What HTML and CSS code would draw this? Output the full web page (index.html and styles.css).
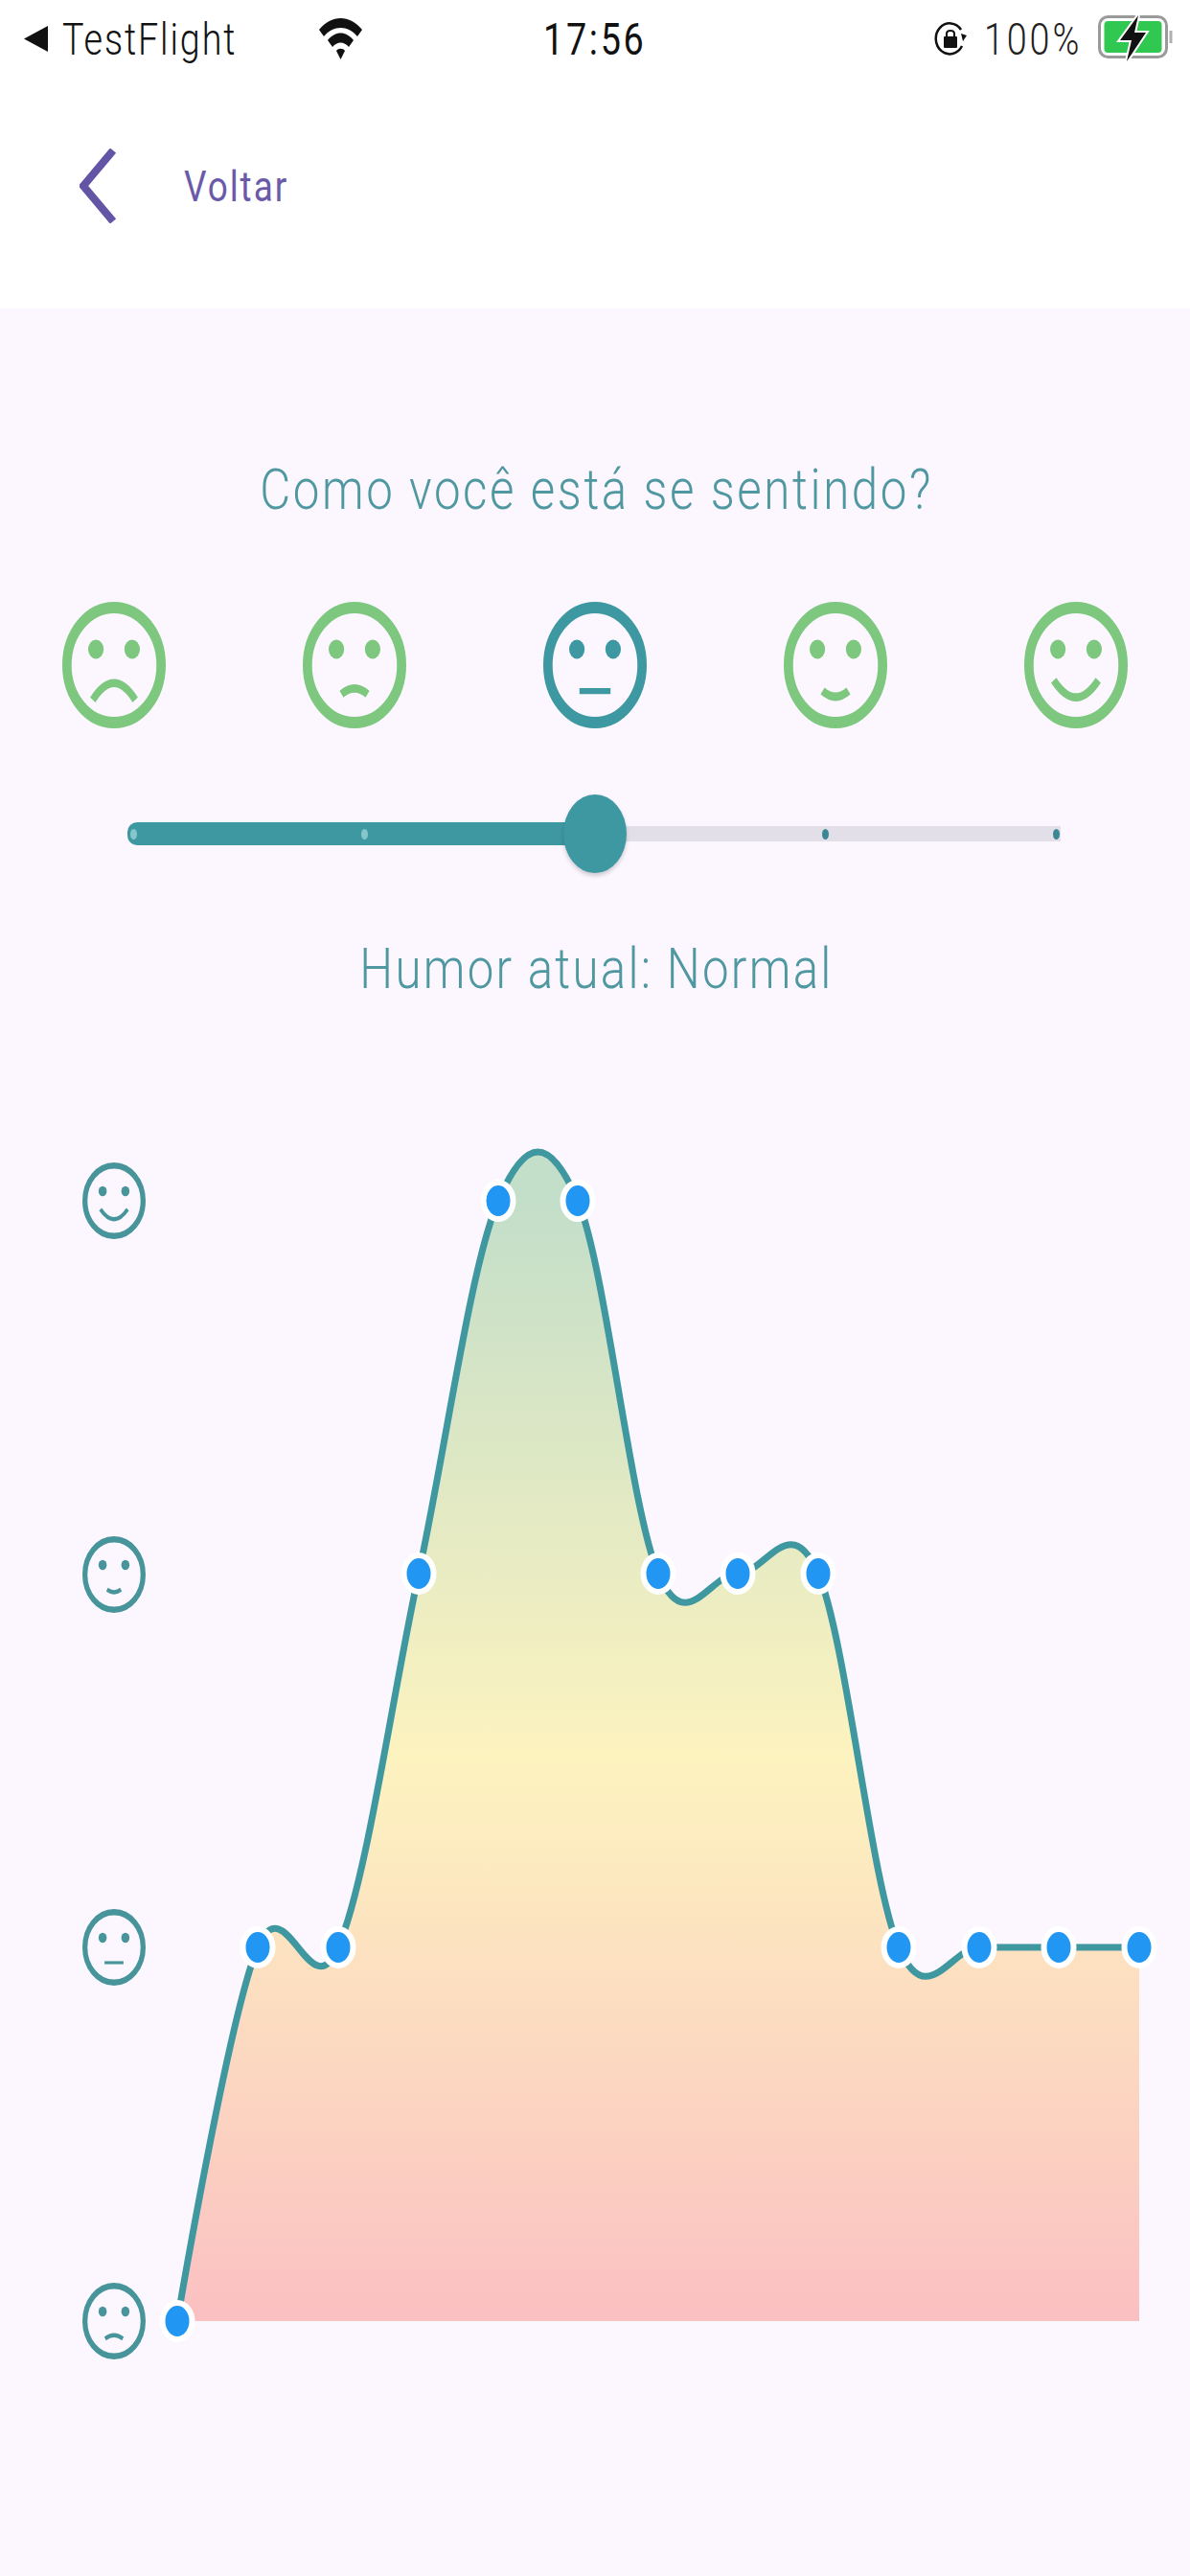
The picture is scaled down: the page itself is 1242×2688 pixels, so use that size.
FILE: index.html
```html
<!DOCTYPE html>
<html>
  <head>
    <title>Humor</title>
    <link rel="stylesheet" href="styles.css">
  </head>
  <body>
    <div class="status-bar">
      <div class="status-left">
        <svg class="back-arrow" viewBox="0 0 25 27"><path d="M25 0V27L0 13.5Z"/></svg>
        <span class="status-text carrier">TestFlight</span>
        <svg class="wifi" viewBox="0 0 47 44">
          <path d="M1 13C14 -3 33 -3 46 13L41 20C31 8 16 8 6 20Z"/>
          <path d="M10 24C18 14 29 14 37 24L32 31C27 25 20 25 15 31Z"/>
          <path d="M19 35C21 32 26 32 28 35L23.5 44Z"/>
        </svg>
      </div>
      <span class="status-text clock">17:56</span>
      <div class="status-right">
        <svg class="rotation-lock" viewBox="0 0 34 36">
          <path class="lock-ring" d="M29 25A14.5 16 0 1 1 28 8"/>
          <path d="M28 12L34 14L30 20Z"/>
          <rect x="10" y="15" width="14" height="12" rx="1"/>
          <path class="lock-ring thin" d="M13 15V12C13 8 21 8 21 12V15"/>
        </svg>
        <span class="status-text level">100%</span>
        <svg class="battery" viewBox="0 0 78 50">
          <rect class="battery-shell" x="1.5" y="2.5" width="70" height="42" rx="9"/>
          <rect class="battery-fill" x="6.5" y="7" width="60" height="33" rx="4"/>
          <path class="battery-nub" d="M76 17V30"/>
          <path class="battery-bolt" d="M42 1L23 27H35L30 49L50 19H38Z"/>
        </svg>
      </div>
    </div>

    <div class="top-nav">
      <svg class="chevron" viewBox="0 0 38 78"><path d="M35 2L4 39L35 76"/></svg>
      <span class="nav-label">Voltar</span>
    </div>

    <div class="content">
      <h2 class="title"><span>Como você está se sentindo?</span></h2>

      <div class="mood-row">
        <svg class="face" viewBox="2 2 20 20" preserveAspectRatio="none">
          <circle class="ring" cx="12" cy="12" r="9.1"/>
          <circle cx="8.5" cy="9.5" r="1.5"/><circle cx="15.5" cy="9.5" r="1.5"/>
          <path class="mouth" d="M7.9 17.5Q12 12.2 16.1 17.5"/>
        </svg>
        <svg class="face" viewBox="2 2 20 20" preserveAspectRatio="none">
          <circle class="ring" cx="12" cy="12" r="9.1"/>
          <circle cx="8.5" cy="9.5" r="1.5"/><circle cx="15.5" cy="9.5" r="1.5"/>
          <path class="mouth" d="M9.5 16.6Q12 14.8 14.5 16.6"/>
        </svg>
        <svg class="face active" viewBox="2 2 20 20" preserveAspectRatio="none">
          <circle class="ring" cx="12" cy="12" r="9.1"/>
          <circle cx="8.5" cy="9.5" r="1.5"/><circle cx="15.5" cy="9.5" r="1.5"/>
          <path class="mouth flat" d="M9 16.1H15"/>
        </svg>
        <svg class="face" viewBox="2 2 20 20" preserveAspectRatio="none">
          <circle class="ring" cx="12" cy="12" r="9.1"/>
          <circle cx="8.5" cy="9.5" r="1.5"/><circle cx="15.5" cy="9.5" r="1.5"/>
          <path class="mouth" d="M9.5 16.1Q12 17.9 14.5 16.1"/>
        </svg>
        <svg class="face" viewBox="2 2 20 20" preserveAspectRatio="none">
          <circle class="ring" cx="12" cy="12" r="9.1"/>
          <circle cx="8.5" cy="9.5" r="1.5"/><circle cx="15.5" cy="9.5" r="1.5"/>
          <path class="mouth" d="M7.7 14.4Q12 19.8 16.3 14.4"/>
        </svg>
      </div>

      <div class="slider">
        <div class="track-on"></div>
        <div class="track-off"></div>
        <div class="ticks">
          <i class="tick light"></i><i class="tick light"></i><i class="tick light"></i><i class="tick"></i><i class="tick"></i>
        </div>
        <div class="thumb"></div>
      </div>

      <p class="current"><span>Humor atual: Normal</span></p>

      <div class="chart">
        <div class="axis">
          <svg class="axis-face" viewBox="2 2 20 20" preserveAspectRatio="none">
            <circle class="ring" cx="12" cy="12" r="9.2"/>
            <circle cx="8.4" cy="9.5" r="1.3"/><circle cx="15.6" cy="9.5" r="1.3"/>
            <path class="mouth" d="M7.7 14.2Q12 19.4 16.3 14.2"/>
          </svg>
          <svg class="axis-face" viewBox="2 2 20 20" preserveAspectRatio="none">
            <circle class="ring" cx="12" cy="12" r="9.2"/>
            <circle cx="8.4" cy="9.5" r="1.3"/><circle cx="15.6" cy="9.5" r="1.3"/>
            <path class="mouth" d="M9.8 15.9Q12 17.3 14.2 15.9"/>
          </svg>
          <svg class="axis-face" viewBox="2 2 20 20" preserveAspectRatio="none">
            <circle class="ring" cx="12" cy="12" r="9.2"/>
            <circle cx="8.4" cy="9.5" r="1.3"/><circle cx="15.6" cy="9.5" r="1.3"/>
            <path class="mouth flat" d="M9 16H15"/>
          </svg>
          <svg class="axis-face" viewBox="2 2 20 20" preserveAspectRatio="none">
            <circle class="ring" cx="12" cy="12" r="9.2"/>
            <circle cx="8.4" cy="9.5" r="1.3"/><circle cx="15.6" cy="9.5" r="1.3"/>
            <path class="mouth" d="M9.2 16.6Q12 14.8 14.8 16.6"/>
          </svg>
        </div>
        <svg class="plot" viewBox="152 1180 1090 1290">
          <defs>
            <linearGradient id="moodFill" gradientUnits="userSpaceOnUse" x1="0" y1="1253" x2="0" y2="2422">
              <stop offset="0" stop-color="#c3dec9"/>
              <stop offset="0.5" stop-color="#fdf3bf"/>
              <stop offset="1" stop-color="#fbc0c2"/>
            </linearGradient>
          </defs>
          <path fill="url(#moodFill)" d="M185 2422C185 2422 239.6 2100.25 269 2032C298.4 1963.75 323.6 2100.25 353 2032C382.4 1963.75 407.8 1778.3 437 1642C466.2 1505.7 491 1321.1 520 1253C549 1184.9 573.8 1184.9 603 1253C632.2 1321.1 657.8 1573.9 687 1642C716.2 1710.1 740.8 1642 770 1642C799.2 1642 824.6 1573.75 854 1642C883.4 1710.25 908.6 1963.75 938 2032C967.4 2100.25 992.8 2032 1022 2032C1051.2 2032 1075.8 2032 1105 2032C1134.2 2032 1189 2032 1189 2032V2422Z"/>
          <path class="line" d="M185 2422C185 2422 239.6 2100.25 269 2032C298.4 1963.75 323.6 2100.25 353 2032C382.4 1963.75 407.8 1778.3 437 1642C466.2 1505.7 491 1321.1 520 1253C549 1184.9 573.8 1184.9 603 1253C632.2 1321.1 657.8 1573.9 687 1642C716.2 1710.1 740.8 1642 770 1642C799.2 1642 824.6 1573.75 854 1642C883.4 1710.25 908.6 1963.75 938 2032C967.4 2100.25 992.8 2032 1022 2032C1051.2 2032 1075.8 2032 1105 2032C1134.2 2032 1189 2032 1189 2032"/>
          <g class="dots">
            <ellipse cx="185" cy="2422"/><ellipse cx="269" cy="2032"/><ellipse cx="353" cy="2032"/>
            <ellipse cx="437" cy="1642"/><ellipse cx="520" cy="1253"/><ellipse cx="603" cy="1253"/>
            <ellipse cx="687" cy="1642"/><ellipse cx="770" cy="1642"/><ellipse cx="854" cy="1642"/>
            <ellipse cx="938" cy="2032"/><ellipse cx="1022" cy="2032"/><ellipse cx="1105" cy="2032"/>
            <ellipse cx="1189" cy="2032"/>
          </g>
        </svg>
      </div>
    </div>
  </body>
</html>
```

FILE: styles.css
```css
html, body {
  margin: 0;
  padding: 0;
}

body {
  width: 1242px;
  height: 2688px;
  overflow: hidden;
  background-color: #ffffff;
  font-family: Roboto, "Liberation Sans", sans-serif;
}

/* the whole screenshot is squeezed sideways, so text gets a scaleX */
.status-text,
.nav-label,
.title span,
.current span {
  display: inline-block;
  white-space: nowrap;
  transform: scaleX(0.82);
}

.status-bar {
  height: 80px;
  box-sizing: border-box;
  display: flex;
  align-items: center;
  justify-content: space-between;
  padding: 2px 18px 0 25px;
  position: relative;
  color: #111111;
}

.status-left,
.status-right {
  display: flex;
  align-items: center;
}

.status-text {
  font-size: 46px;
  line-height: 78px;
}

.back-arrow {
  width: 25px;
  height: 27px;
  fill: #111111;
  margin-top: -2px;
}

.carrier {
  margin-left: 15px;
  transform-origin: left center;
  width: 181px;
  letter-spacing: 2.3px;
  font-weight: 300;
}

.wifi {
  width: 47px;
  height: 44px;
  margin-left: 86px;
  margin-top: -3px;
  fill: #111111;
}

.clock {
  position: absolute;
  left: 567px;
  top: 2px;
  transform-origin: left center;
  letter-spacing: 3.3px;
}

.rotation-lock {
  width: 34px;
  height: 36px;
  fill: #111111;
}

.lock-ring {
  fill: none;
  stroke: #111111;
  stroke-width: 2.5;
}

.lock-ring.thin {
  stroke-width: 2;
}

.level {
  margin-left: 18px;
  width: 101px;
  transform-origin: left center;
  color: #222222;
  letter-spacing: 3.5px;
  font-weight: 300;
}

.battery {
  width: 78px;
  height: 50px;
  margin-left: 18px;
  margin-top: -3px;
}

.battery-shell {
  fill: none;
  stroke: #9a9a9a;
  stroke-width: 3;
}

.battery-fill {
  fill: #30c850;
}

.battery-nub {
  fill: none;
  stroke: #b0b0b0;
  stroke-width: 3;
}

.battery-bolt {
  fill: #111111;
  stroke: #ffffff;
  stroke-width: 4;
  paint-order: stroke;
}

.top-nav {
  height: 242px;
  display: flex;
  align-items: flex-start;
  padding: 75px 0 0 83px;
  box-sizing: border-box;
}

.chevron {
  width: 38px;
  height: 78px;
  fill: none;
  stroke: #6454a6;
  stroke-width: 8;
}

.nav-label {
  margin: 14px 0 0 71px;
  font-size: 45px;
  line-height: 52px;
  color: #6a5ba9;
  transform-origin: left center;
  letter-spacing: 2.4px;
}

.content {
  height: 2366px;
  background-color: #fcf7ff;
  overflow: hidden;
}

.title {
  margin: 154px 0 0;
  padding-left: 4px;
  font-size: 60px;
  font-weight: 300;
  line-height: 70px;
  letter-spacing: 3.2px;
  text-align: center;
  color: #4f97a1;
}

.mood-row {
  display: flex;
  justify-content: space-between;
  margin: 82px 65px 0 65px;
}

.face {
  width: 108px;
  height: 132px;
  fill: #7dc77f;
}

.face.active {
  fill: #3d98a1;
}

.face .ring {
  stroke: #7dc77f;
  fill: none;
  stroke-width: 1.8;
}

.face.active .ring {
  stroke: #3d98a1;
}

.mouth {
  fill: none;
  stroke-width: 1.3;
}

.face .mouth {
  stroke: #7dc77f;
}

.face.active .mouth {
  stroke: #3d98a1;
}

.mouth.flat {
  stroke-width: 0.95;
}

.slider {
  position: relative;
  display: flex;
  align-items: center;
  height: 24px;
  margin: 98px 135px 0 133px;
}

.track-on {
  width: 488px;
  height: 24px;
  background-color: #3d98a1;
  border-radius: 10px 0 0 10px;
}

.track-off {
  flex: 1;
  height: 16px;
  background-color: #e3dfe8;
}

.ticks {
  position: absolute;
  inset: 0;
  display: flex;
  align-items: center;
  justify-content: space-between;
  padding: 0 1px 0 3px;
}

.tick {
  width: 7px;
  height: 11px;
  border-radius: 50%;
  background-color: #3b8794;
}

.tick.light {
  background-color: #86c6ca;
}

.thumb {
  position: absolute;
  left: 455px;
  top: -29px;
  width: 66px;
  height: 82px;
  border-radius: 50%;
  background-color: #3d98a1;
  box-shadow: 0 3px 4px rgba(0, 0, 0, 0.18);
}

.current {
  margin: 94px 0 0;
  padding-left: 2px;
  font-size: 60px;
  font-weight: 300;
  line-height: 70px;
  letter-spacing: 2.8px;
  text-align: center;
  color: #4f97a1;
}

.chart {
  display: flex;
  height: 1290px;
  margin-top: 134px;
}

.axis {
  width: 66px;
  margin-left: 86px;
  padding: 33px 0 8px;
  display: flex;
  flex-direction: column;
  justify-content: space-between;
}

.axis-face {
  width: 66px;
  height: 80px;
  fill: #47959b;
}

.axis-face .ring {
  fill: none;
  stroke: #47959b;
  stroke-width: 1.6;
}

.axis-face .mouth {
  stroke: #47959b;
  stroke-width: 1.1;
}

.axis-face .mouth.flat {
  stroke-width: 0.8;
}

.plot {
  width: 1090px;
  height: 1290px;
}

.line {
  fill: none;
  stroke: #3f979f;
  stroke-width: 7;
}

.dots ellipse {
  rx: 15.5px;
  ry: 19px;
  fill: #2196f3;
  stroke: #ffffff;
  stroke-width: 6;
}
```
